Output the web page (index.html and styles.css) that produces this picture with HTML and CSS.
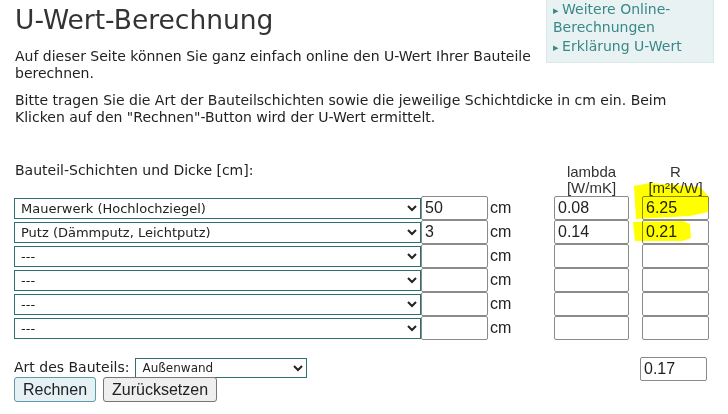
FILE: index.html
```html
<!DOCTYPE html>
<html lang="de">

<head>
    <meta charset="UTF-8">
    <meta name="viewport" content="width=device-width, initial-scale=1.0">
    <title>U-Wert-Berechnung</title>
    <link rel="stylesheet" href="styles.css">
</head>

<body>
    <!-- Seitenleiste -->
    <div class="sidebar">
        <a href="#">Weitere Online-Berechnungen</a>
        <a href="#">Erklärung U-Wert</a>
    </div>

    <h1>U-Wert-Berechnung</h1>
    <p>Auf dieser Seite können Sie ganz einfach online den U-Wert Ihrer Bauteile berechnen.</p>
    <p>Bitte tragen Sie die Art der Bauteilschichten sowie die jeweilige Schichtdicke in cm ein. Beim Klicken auf den "Rechnen"-Button wird der U-Wert ermittelt.</p>

    <!-- Rechner -->
    <form class="calc" onsubmit="return false;">
        <div class="calc-head">
            <span class="head-label">Bauteil-Schichten und Dicke [cm]:</span>
            <span class="head-lambda">lambda<br>[W/mK]</span>
            <span class="head-r">R<br>[m²K/W]</span>
        </div>

        <div class="rows">
            <div class="row">
                <select class="layer">
                    <option>Mauerwerk (Hochlochziegel)</option>
                </select>
                <input type="text" class="thick" value="50">
                <span class="unit">cm</span>
                <input type="text" class="lambda" value="0.08">
                <input type="text" class="r" value="6.25">
            </div>
            <div class="row">
                <select class="layer">
                    <option>Putz (Dämmputz, Leichtputz)</option>
                </select>
                <input type="text" class="thick" value="3">
                <span class="unit">cm</span>
                <input type="text" class="lambda" value="0.14">
                <input type="text" class="r" value="0.21">
            </div>
            <div class="row">
                <select class="layer"><option>---</option></select>
                <input type="text" class="thick">
                <span class="unit">cm</span>
                <input type="text" class="lambda">
                <input type="text" class="r">
            </div>
            <div class="row">
                <select class="layer"><option>---</option></select>
                <input type="text" class="thick">
                <span class="unit">cm</span>
                <input type="text" class="lambda">
                <input type="text" class="r">
            </div>
            <div class="row">
                <select class="layer"><option>---</option></select>
                <input type="text" class="thick">
                <span class="unit">cm</span>
                <input type="text" class="lambda">
                <input type="text" class="r">
            </div>
            <div class="row">
                <select class="layer"><option>---</option></select>
                <input type="text" class="thick">
                <span class="unit">cm</span>
                <input type="text" class="lambda">
                <input type="text" class="r">
            </div>

            <!-- Markierung -->
            <svg class="marker" width="80" height="62" viewBox="0 0 80 62">
                <path d="M1 4 L17 1 L67 5 L76 15 L75 30 L57 34 L3 37 Z" fill="#ffff00"/>
                <path d="M0 40 L50 39 L57 42 L58 56 L50 59 L2 59 Z" fill="#ffff00"/>
            </svg>
        </div>

        <div class="type-row">
            <label>Art des Bauteils:</label>
            <select class="type">
                <option>Außenwand</option>
            </select>
            <input type="text" class="r total" value="0.17">
        </div>

        <div class="buttons">
            <button class="btn-calc">Rechnen</button>
            <button class="btn-reset" type="reset">Zurücksetzen</button>
        </div>
    </form>
</body>

</html>
```

FILE: styles.css
```css
body {
    font-family: "DejaVu Sans", Verdana, sans-serif;
    font-size: 14px;
    color: #222222;
    margin: 0;
    padding: 0 14px;
    background-color: #ffffff;
}

h1 {
    font-weight: normal;
    font-size: 26.5px;
    color: #333333;
    margin: 4px 0 12px 1px;
    line-height: 32px;
}

p {
    margin: 0 0 10px 1px;
    line-height: 17px;
}
/* Sidebar */

.sidebar {
    float: right;
    width: 160px;
    margin: 0 0 0 10px;
    padding: 1px 0 6px 6px;
    background-color: #e8f2f3;
    border: 1px solid #dbe7e8;
    border-top: none;
    font-size: 14px;
    line-height: 17px;
}

.sidebar a {
    display: block;
    color: #3a8787;
    text-decoration: none;
}

.sidebar a + a {
    margin-top: 2px;
}

.sidebar a::before {
    content: "\25B8\00a0";
    font-size: 11px;
}
/* Calculator */

.calc {
    margin-top: 36px;
}

.calc-head {
    display: flex;
    align-items: flex-end;
    font-family: "Liberation Sans", Arial, sans-serif;
    font-size: 15px;
    line-height: 16px;
    height: 34px;
}

.head-label {
    font-family: "DejaVu Sans", Verdana, sans-serif;
    font-size: 14px;
    align-self: flex-start;
    width: 539px;
    padding-left: 1px;
}

.head-lambda {
    width: 75px;
    text-align: center;
    color: #333333;
}

.head-r {
    width: 67px;
    margin-left: 13px;
    text-align: center;
    color: #333333;
}

.rows {
    position: relative;
}

.row {
    display: flex;
    align-items: center;
    height: 24px;
}

select {
    font-family: "DejaVu Sans", Verdana, sans-serif;
    font-size: 13px;
    color: #222222;
    background-color: #ffffff;
    border: 1px solid #2f6f72;
    border-radius: 0;
    height: 21px;
    padding: 0 2px;
}

.layer {
    width: 407px;
}

input {
    font-family: "Liberation Sans", Arial, sans-serif;
    font-size: 16px;
    color: #222222;
    border: 1px solid #8a8a8a;
    border-radius: 2px;
    height: 24px;
    box-sizing: border-box;
    padding: 1px 3px;
    margin: 0;
}

.thick {
    width: 67px;
}

.unit {
    font-family: "Liberation Sans", Arial, sans-serif;
    font-size: 16px;
    width: 64px;
    padding-left: 2px;
    color: #222222;
}

.lambda {
    width: 75px;
}

.r {
    width: 67px;
    margin-left: 13px;
}

.marker {
    position: absolute;
    left: 619px;
    top: -14px;
    mix-blend-mode: multiply;
    pointer-events: none;
}

.type-row {
    display: flex;
    align-items: flex-start;
    margin-top: 18px;
    height: 20px;
}

.type-row label {
    margin: 1px 6px 0 0;
}

.type {
    width: 172px;
    height: 20px;
    font-size: 12px;
}

.total {
    margin: -1px 7px 0 auto;
}

.buttons {
    display: flex;
    gap: 7px;
    margin-top: -1px;
}

.buttons button {
    font-family: "Liberation Sans", Arial, sans-serif;
    font-size: 16px;
    padding: 1px 8px;
    height: 25px;
    border: 1px solid #767676;
    border-radius: 3px;
    background-color: #efefef;
    color: #222222;
}

.buttons .btn-calc {
    background-color: #e5f1f4;
    border-color: #5f9ba5;
}
```
